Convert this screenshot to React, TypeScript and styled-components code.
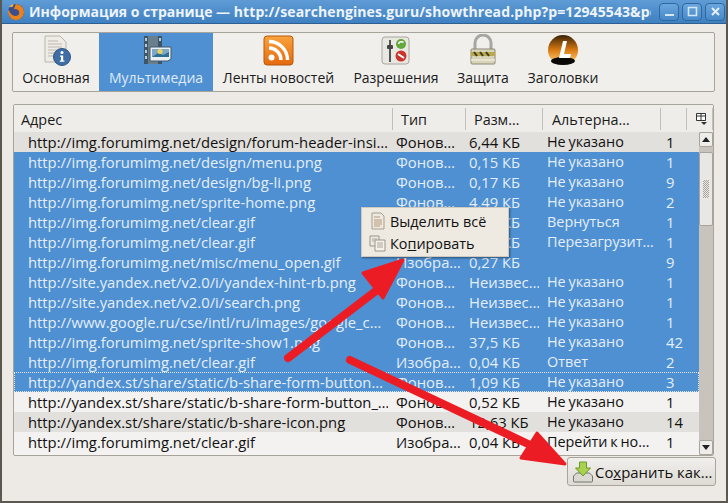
import React from "react";
import styled, { createGlobalStyle } from "styled-components";

const Global = createGlobalStyle`
  html, body { margin: 0; padding: 0; width: 728px; height: 503px; overflow: hidden; background: #edeae6; }
  * { box-sizing: border-box; }
  #root { width: 728px; height: 503px; }
`;

const Win = styled.div`
  position: relative;
  width: 728px;
  height: 503px;
  display: flex;
  flex-direction: column;
  background: #edeae5;
  font-family: "Open Sans", "Noto Sans", sans-serif;
  font-size: 14px;
  color: #111;
  overflow: hidden;
  border-left: 2px solid #5b5852;
  border-right: 2px solid #5b5852;
  border-bottom: 2px solid #5b5852;
`;

const TitleBar = styled.div`
  height: 24px;
  flex: none;
  margin: 0 -2px;
  padding: 0 3px 0 7px;
  display: flex;
  align-items: center;
  gap: 4px;
  background: linear-gradient(#5f9cd6, #3f80c1);
  border-bottom: 1px solid #2d5f93;
`;

const Title = styled.div`
  flex: 1;
  min-width: 0;
  white-space: nowrap;
  overflow: hidden;
  color: #eef4fa;
  font-weight: 700;
  font-size: 14px;
`;

const TitleUrl = styled.span`
  letter-spacing: 0.1px;
`;

const WinButtons = styled.div`
  display: flex;
  gap: 3px;
  margin-left: 4px;
`;

const WinButton = styled.div`
  width: 20px;
  height: 18px;
  border-radius: 4px;
  border: 1px solid #2f689f;
  background: linear-gradient(#6ba6dd, #4689c9);
  display: flex;
  align-items: center;
  justify-content: center;
`;

const Body = styled.div`
  flex: 1;
  display: flex;
  flex-direction: column;
  padding: 8px 11px 0 10px;
`;

const Tabs = styled.div`
  height: 60px;
  flex: none;
  display: flex;
  background: #f1efec;
  border: 1px solid #a8a49c;
  border-radius: 2px;
`;

const Tab = styled.div<{ $active?: boolean; $w: number }>`
  width: ${(p) => p.$w}px;
  display: flex;
  flex-direction: column;
  align-items: center;
  background: ${(p) => (p.$active ? "#4f90d2" : "transparent")};
  color: ${(p) => (p.$active ? "#dfeaf6" : "#1a1a1a")};
  font-size: 14px;
  white-space: nowrap;
`;

const TabIcon = styled.svg`
  width: 34px;
  height: 34px;
  margin-top: 1px;
  flex: none;
`;

const TabLabel = styled.span`
  line-height: 20px;
`;

const Tree = styled.div`
  position: relative;
  margin-top: 12px;
  height: 352px;
  flex: none;
  width: 701px;
  margin-left: 1px;
  background: #f4f3f1;
  border: 1px solid #a8a49c;
  border-radius: 2px;
  display: flex;
  flex-direction: column;
  overflow: hidden;
`;

const Head = styled.div`
  height: 27px;
  flex: none;
  display: grid;
  grid-template-columns: 379px 73px 77px 118px 26px 1fr;
  background: #efedea;
`;

const HeadCell = styled.div<{ $pad?: number }>`
  padding-left: ${(p) => p.$pad ?? 8}px;
  display: flex;
  align-items: center;
  font-size: 14.4px;
  color: #1a1a1a;
  border-right: 1px solid #c4c0b9;
  margin: 3px 0 2px;
  white-space: nowrap;
`;

const TreeBody = styled.div`
  flex: 1;
  display: flex;
  min-height: 0;
`;

const Rows = styled.div`
  flex: 1;
  min-width: 0;
`;

const Row = styled.div<{ $sel?: boolean; $odd?: boolean; $focus?: boolean }>`
  height: 20px;
  display: grid;
  grid-template-columns: 374px 73px 78px 118px 1fr;
  align-items: center;
  white-space: nowrap;
  font-size: 14.8px;
  background: ${(p) => (p.$sel ? "#4f90d2" : p.$odd ? "#e2e0dc" : "#f3f2f0")};
  color: ${(p) => (p.$sel ? "#e4eef8" : "#111")};
  outline: ${(p) => (p.$focus ? "1px dotted #dfeaf6" : "none")};
  outline-offset: -1px;
`;

const Cell = styled.div<{ $pad?: number; $tight?: boolean }>`
  padding-left: ${(p) => p.$pad ?? 8}px;
  overflow: hidden;
  white-space: nowrap;
  line-height: 20px;
  font-size: ${(p) => (p.$tight ? "14.4px" : "inherit")};
  word-spacing: ${(p) => (p.$tight ? "-1px" : "0")};
`;

const Scrollbar = styled.div`
  width: 14px;
  flex: none;
  background: #c8c4bd;
  display: flex;
  flex-direction: column;
`;

const ScrollBtn = styled.div`
  height: 15px;
  flex: none;
  background: #efedea;
  border: 1px solid #a8a49c;
  border-radius: 2px;
  display: flex;
  align-items: center;
  justify-content: center;
`;

const Thumb = styled.div`
  height: 74px;
  flex: none;
  margin-top: 5px;
  background: #e9e7e3;
  border: 1px solid #a8a49c;
  border-radius: 2px;
  display: flex;
  align-items: center;
  justify-content: center;
`;

const Grip = styled.div`
  width: 6px;
  height: 18px;
  background: repeating-conic-gradient(#a8a49c 0 25%, transparent 0 50%) 0 0 / 2px 2px;
`;

const Track = styled.div`
  flex: 1;
`;

const Footer = styled.div`
  flex: 1;
  display: flex;
  justify-content: flex-end;
  align-items: flex-start;
  padding-top: 1px;
  margin-right: -1px;
`;

const SaveButton = styled.div`
  height: 29px;
  width: 149px;
  border: 1px solid #a8a49c;
  border-radius: 3px;
  background: linear-gradient(#f1efec, #dedbd5);
  display: flex;
  align-items: center;
  gap: 1px;
  padding-left: 4px;
  white-space: nowrap;
  font-size: 14.9px;
`;

const Menu = styled.div`
  position: absolute;
  left: 359px;
  top: 207px;
  width: 148px;
  height: 50px;
  background: #eee9e1;
  border: 1px solid #cfc9bf;
  box-shadow: 1px 1px 2px rgba(0, 0, 0, 0.45);
  display: flex;
  flex-direction: column;
  padding-top: 2px;
  color: #111;
`;

const MenuItem = styled.div`
  height: 22px;
  display: flex;
  align-items: center;
  gap: 3px;
  padding-left: 7px;
  font-size: 14.4px;
`;

const Arrows = styled.svg`
  position: absolute;
  left: -2px;
  top: 0;
  pointer-events: none;
`;

const U = styled.span`
  text-decoration: underline;
`;

type R = [string, string, string, string, string];
const data: R[] = [
  ["http://img.forumimg.net/design/forum-header-insi…", "Фонов…", "6,44 КБ", "Не указано", "1"],
  ["http://img.forumimg.net/design/menu.png", "Фонов…", "0,15 КБ", "Не указано", "1"],
  ["http://img.forumimg.net/design/bg-li.png", "Фонов…", "0,17 КБ", "Не указано", "9"],
  ["http://img.forumimg.net/sprite-home.png", "Фонов…", "4,49 КБ", "Не указано", "2"],
  ["http://img.forumimg.net/clear.gif", "Фонов…", "0,04 КБ", "Вернуться", "1"],
  ["http://img.forumimg.net/clear.gif", "Фонов…", "0,04 КБ", "Перезагрузит…", "1"],
  ["http://img.forumimg.net/misc/menu_open.gif", "Изобра…", "0,27 КБ", "", "9"],
  ["http://site.yandex.net/v2.0/i/yandex-hint-rb.png", "Фонов…", "Неизвес…", "Не указано", "1"],
  ["http://site.yandex.net/v2.0/i/search.png", "Фонов…", "Неизвес…", "Не указано", "1"],
  ["http://www.google.ru/cse/intl/ru/images/google_c…", "Фонов…", "Неизвес…", "Не указано", "1"],
  ["http://img.forumimg.net/sprite-show1.png", "Фонов…", "37,5 КБ", "Не указано", "42"],
  ["http://img.forumimg.net/clear.gif", "Изобра…", "0,04 КБ", "Ответ", "2"],
  ["http://yandex.st/share/static/b-share-form-button…", "Фонов…", "1,09 КБ", "Не указано", "3"],
  ["http://yandex.st/share/static/b-share-form-button_…", "Фонов…", "0,52 КБ", "Не указано", "1"],
  ["http://yandex.st/share/static/b-share-icon.png", "Фонов…", "12,63 КБ", "Не указано", "14"],
  ["http://img.forumimg.net/clear.gif", "Изобра…", "0,04 КБ", "Перейти к но…", "1"],
];

const PageIcon = () => (
  <svg width="18" height="18" viewBox="0 0 18 18">
    <path d="M3 1h9l3 3v13H3z" fill="#efe9dd" stroke="#a59f94" />
    <path d="M5 5h6M5 8h8M5 10h8M5 12h8M5 14h6" stroke="#b39a7e" />
  </svg>
);
const CopyIcon = () => (
  <svg width="18" height="18" viewBox="0 0 18 18">
    <path d="M1 2h9v10H1z" fill="#eeeae2" stroke="#9a958b" />
    <path d="M6 6h10v11H6z" fill="#f5f2ec" stroke="#9a958b" />
    <path d="M8 9h6M8 11h6M8 13h6M3 5h5M3 7h2" stroke="#a9a59c" />
  </svg>
);

export default function App() {
  return (
    <Win>
      <Global />
      <TitleBar>
        <svg width="18" height="18" viewBox="0 0 18 18" style={{ flex: "none" }}>
          <circle cx="9" cy="9" r="8" fill="#3c4f8a" />
          <path d="M9 1a8 8 0 1 1-7.6 5.5C3 9 3.5 12 8 13c3 .3 5-2 4-4.500-.8-2-3-3-5-2 .5-2 1-4 2-5.500z" fill="#e8811e" />
          <path d="M2 4c1-1.500 3-3 5-3-1 1-1 2-1.500 3z" fill="#f4b13b" />
        </svg>
        <Title>Информация о странице — <TitleUrl>http://searchengines.guru/showthread.php?p=12945543&amp;po</TitleUrl></Title>
        <WinButtons>
          <WinButton>
            <svg width="11" height="11" viewBox="0 0 11 11"><path d="M1 8h9v2H1z" fill="#d7e6f5" /></svg>
          </WinButton>
          <WinButton>
            <svg width="11" height="11" viewBox="0 0 11 11"><path d="M1.500 1.500h8v8h-8z" fill="none" stroke="#d7e6f5" strokeWidth="1.600" /></svg>
          </WinButton>
          <WinButton>
            <svg width="11" height="11" viewBox="0 0 11 11"><path d="M2 2l7 7M9 2l-7 7" stroke="#e6f0fa" strokeWidth="2" /></svg>
          </WinButton>
        </WinButtons>
      </TitleBar>
      <Body>
        <Tabs>
          <Tab $w={86}>
            <TabIcon viewBox="0 0 34 34">
              <path d="M6 2h15l6 6v20H6z" fill="#efece6" stroke="#b9b5ad" />
              <path d="M9 7h10M9 10h14M9 13h14M9 16h9M9 19h8M9 22h8" stroke="#bdb9b0" />
              <circle cx="23" cy="23" r="8.500" fill="#3f6ea6" stroke="#2e5585" />
              <circle cx="23" cy="18.500" r="1.500" fill="#fff" />
              <path d="M21 21.500h3.200v5h1.200v1.300h-4.600v-1.300h1.200v-3.700h-1z" fill="#fff" />
            </TabIcon>
            <TabLabel>Основная</TabLabel>
          </Tab>
          <Tab $w={114} $active>
            <TabIcon viewBox="0 0 34 34">
              <rect x="5" y="2" width="18" height="28" fill="#6a7f8e" />
              <path d="M5 2h4v28H5zM19 2h4v28h-4z" fill="#3e5568" />
              <path d="M6 4h2v3H6zM6 10h2v3H6zM6 16h2v3H6zM6 22h2v3H6zM20 4h2v3h-2z" fill="#b9cbd8" />
              <path d="M11 13h21v12l-3 2H11z" fill="#e9eff3" stroke="#42586a" />
              <path d="M13 15h17v8H13z" fill="#7fa8c6" />
              <path d="M13 23l6-4 5 2 6-3v5z" fill="#2f6f91" />
              <circle cx="21" cy="17.500" r="2.500" fill="#e8d35c" />
            </TabIcon>
            <TabLabel>Мультимедиа</TabLabel>
          </Tab>
          <Tab $w={131}>
            <TabIcon viewBox="0 0 34 34">
              <defs>
                <linearGradient id="rss" x1="0" y1="0" x2="0" y2="1">
                  <stop offset="0" stopColor="#f9a33c" />
                  <stop offset="1" stopColor="#e4690f" />
                </linearGradient>
              </defs>
              <rect x="2" y="2" width="29" height="29" rx="3" fill="url(#rss)" stroke="#b7590f" />
              <circle cx="9.500" cy="23.500" r="3" fill="#fff" />
              <path d="M7 14a12 12 0 0 1 12 12" fill="none" stroke="#fff" strokeWidth="3.400" />
              <path d="M7 7.500a18.500 18.500 0 0 1 18.500 18.500" fill="none" stroke="#fff" strokeWidth="3.400" />
            </TabIcon>
            <TabLabel>Ленты новостей</TabLabel>
          </Tab>
          <Tab $w={104}>
            <TabIcon viewBox="0 0 34 34">
              <rect x="3" y="3" width="27" height="27" rx="3" fill="#e9e7e2" stroke="#aaa69d" />
              <path d="M11 6v22" stroke="#555" strokeWidth="2" />
              <rect x="8" y="11" width="6" height="4" rx="1" fill="#444" />
              <circle cx="22" cy="10" r="5" fill="#62a93a" />
              <path d="M19.500 10a3 3 0 0 1 5-1.500" fill="none" stroke="#fff" strokeWidth="1.500" />
              <circle cx="22" cy="22" r="5.500" fill="#c9342e" />
              <path d="M19 20l6 4" stroke="#fff" strokeWidth="2" />
            </TabIcon>
            <TabLabel>Разрешения</TabLabel>
          </Tab>
          <Tab $w={70}>
            <TabIcon viewBox="0 0 34 34">
              <path d="M9 15V9a8 8 0 0 1 16 0v6" fill="none" stroke="#a7a69f" strokeWidth="3" />
              <rect x="5" y="15" width="24" height="15" rx="1" fill="#d8d4b8" stroke="#8c8a78" />
              <path d="M5 18h24v4H5z" fill="#b9a94a" />
              <path d="M8 18l3 4M14 18l3 4M20 18l3 4" stroke="#3d3a2a" strokeWidth="2" />
              <path d="M5 26h24" stroke="#eceadb" strokeWidth="1.500" />
            </TabIcon>
            <TabLabel>Защита</TabLabel>
          </Tab>
          <Tab $w={90}>
            <TabIcon viewBox="0 0 34 34">
              <defs>
                <linearGradient id="lh" x1="0" y1="0" x2="0" y2="1">
                  <stop offset="0" stopColor="#3a2208" />
                  <stop offset="0.5" stopColor="#d97a12" />
                  <stop offset="0.8" stopColor="#f7b556" />
                </linearGradient>
              </defs>
              <circle cx="17" cy="16" r="15" fill="url(#lh)" />
              <ellipse cx="17" cy="27" rx="12" ry="4" fill="#0b0906" />
              <path d="M17 7h4l-3 13h7l-1 4H13z" fill="#fff" />
            </TabIcon>
            <TabLabel>Заголовки</TabLabel>
          </Tab>
        </Tabs>
        <Tree>
          <Head>
            <HeadCell $pad={7}>Адрес</HeadCell>
            <HeadCell>Тип</HeadCell>
            <HeadCell>Разм…</HeadCell>
            <HeadCell $pad={9}>Альтерна…</HeadCell>
            <HeadCell />
            <HeadCell $pad={9}>
              <svg width="11" height="12" viewBox="0 0 11 12">
                <path d="M.5.500h9v7h-9zM.5 3h9M5 .5v7" fill="#fff" stroke="#333" />
                <path d="M5 9h6l-3 3z" fill="#333" />
              </svg>
            </HeadCell>
          </Head>
          <TreeBody>
            <Rows>
              {data.map((r, i) => (
                <Row key={i} $sel={i >= 1 && i <= 12} $odd={i === 0 || i === 14} $focus={i === 12}>
                  <Cell $pad={14}>{r[0]}</Cell>
                  <Cell>{r[1]}</Cell>
                  <Cell>{r[2]}</Cell>
                  <Cell $tight>{r[3]}</Cell>
                  <Cell $pad={9}>{r[4]}</Cell>
                </Row>
              ))}
            </Rows>
            <Scrollbar>
              <ScrollBtn>
                <svg width="8" height="5" viewBox="0 0 8 5"><path d="M0 5l4-5 4 5z" fill="#222" /></svg>
              </ScrollBtn>
              <Thumb><Grip /></Thumb>
              <Track />
              <ScrollBtn>
                <svg width="8" height="5" viewBox="0 0 8 5"><path d="M0 0l4 5 4-5z" fill="#222" /></svg>
              </ScrollBtn>
            </Scrollbar>
          </TreeBody>
        </Tree>
        <Footer>
          <SaveButton>
            <svg width="22" height="22" viewBox="0 0 22 22" style={{ flex: "none" }}>
              <path d="M1.500 15l3-3h13l3 3v5a1 1 0 0 1-1 1h-17a1 1 0 0 1-1-1z" fill="#d9d8d2" stroke="#77756e" />
              <path d="M7.500 1h7v6h4l-7.500 8-7.500-8h4z" fill="#a9d04e" stroke="#6d9a2c" />
            </svg>
            <span>Со<U>х</U>ранить как…</span>
          </SaveButton>
        </Footer>
      </Body>
      <Menu>
        <MenuItem><PageIcon />Выделить всё</MenuItem>
        <MenuItem><CopyIcon /><span>Ко<U>п</U>ировать</span></MenuItem>
      </Menu>
      <Arrows width="728" height="503" viewBox="0 0 728 503">
        <path d="M288 358L385 284" stroke="#ec1c24" strokeWidth="8" strokeLinecap="round" />
        <path d="M403 260L363 273L383 298z" fill="#ec1c24" stroke="#ec1c24" strokeWidth="3" strokeLinejoin="round" />
        <path d="M350 360L545 452" stroke="#ec1c24" strokeWidth="8" strokeLinecap="round" />
        <path d="M565 464L521 458L537 433z" fill="#ec1c24" stroke="#ec1c24" strokeWidth="3" strokeLinejoin="round" />
      </Arrows>
    </Win>
  );
}
